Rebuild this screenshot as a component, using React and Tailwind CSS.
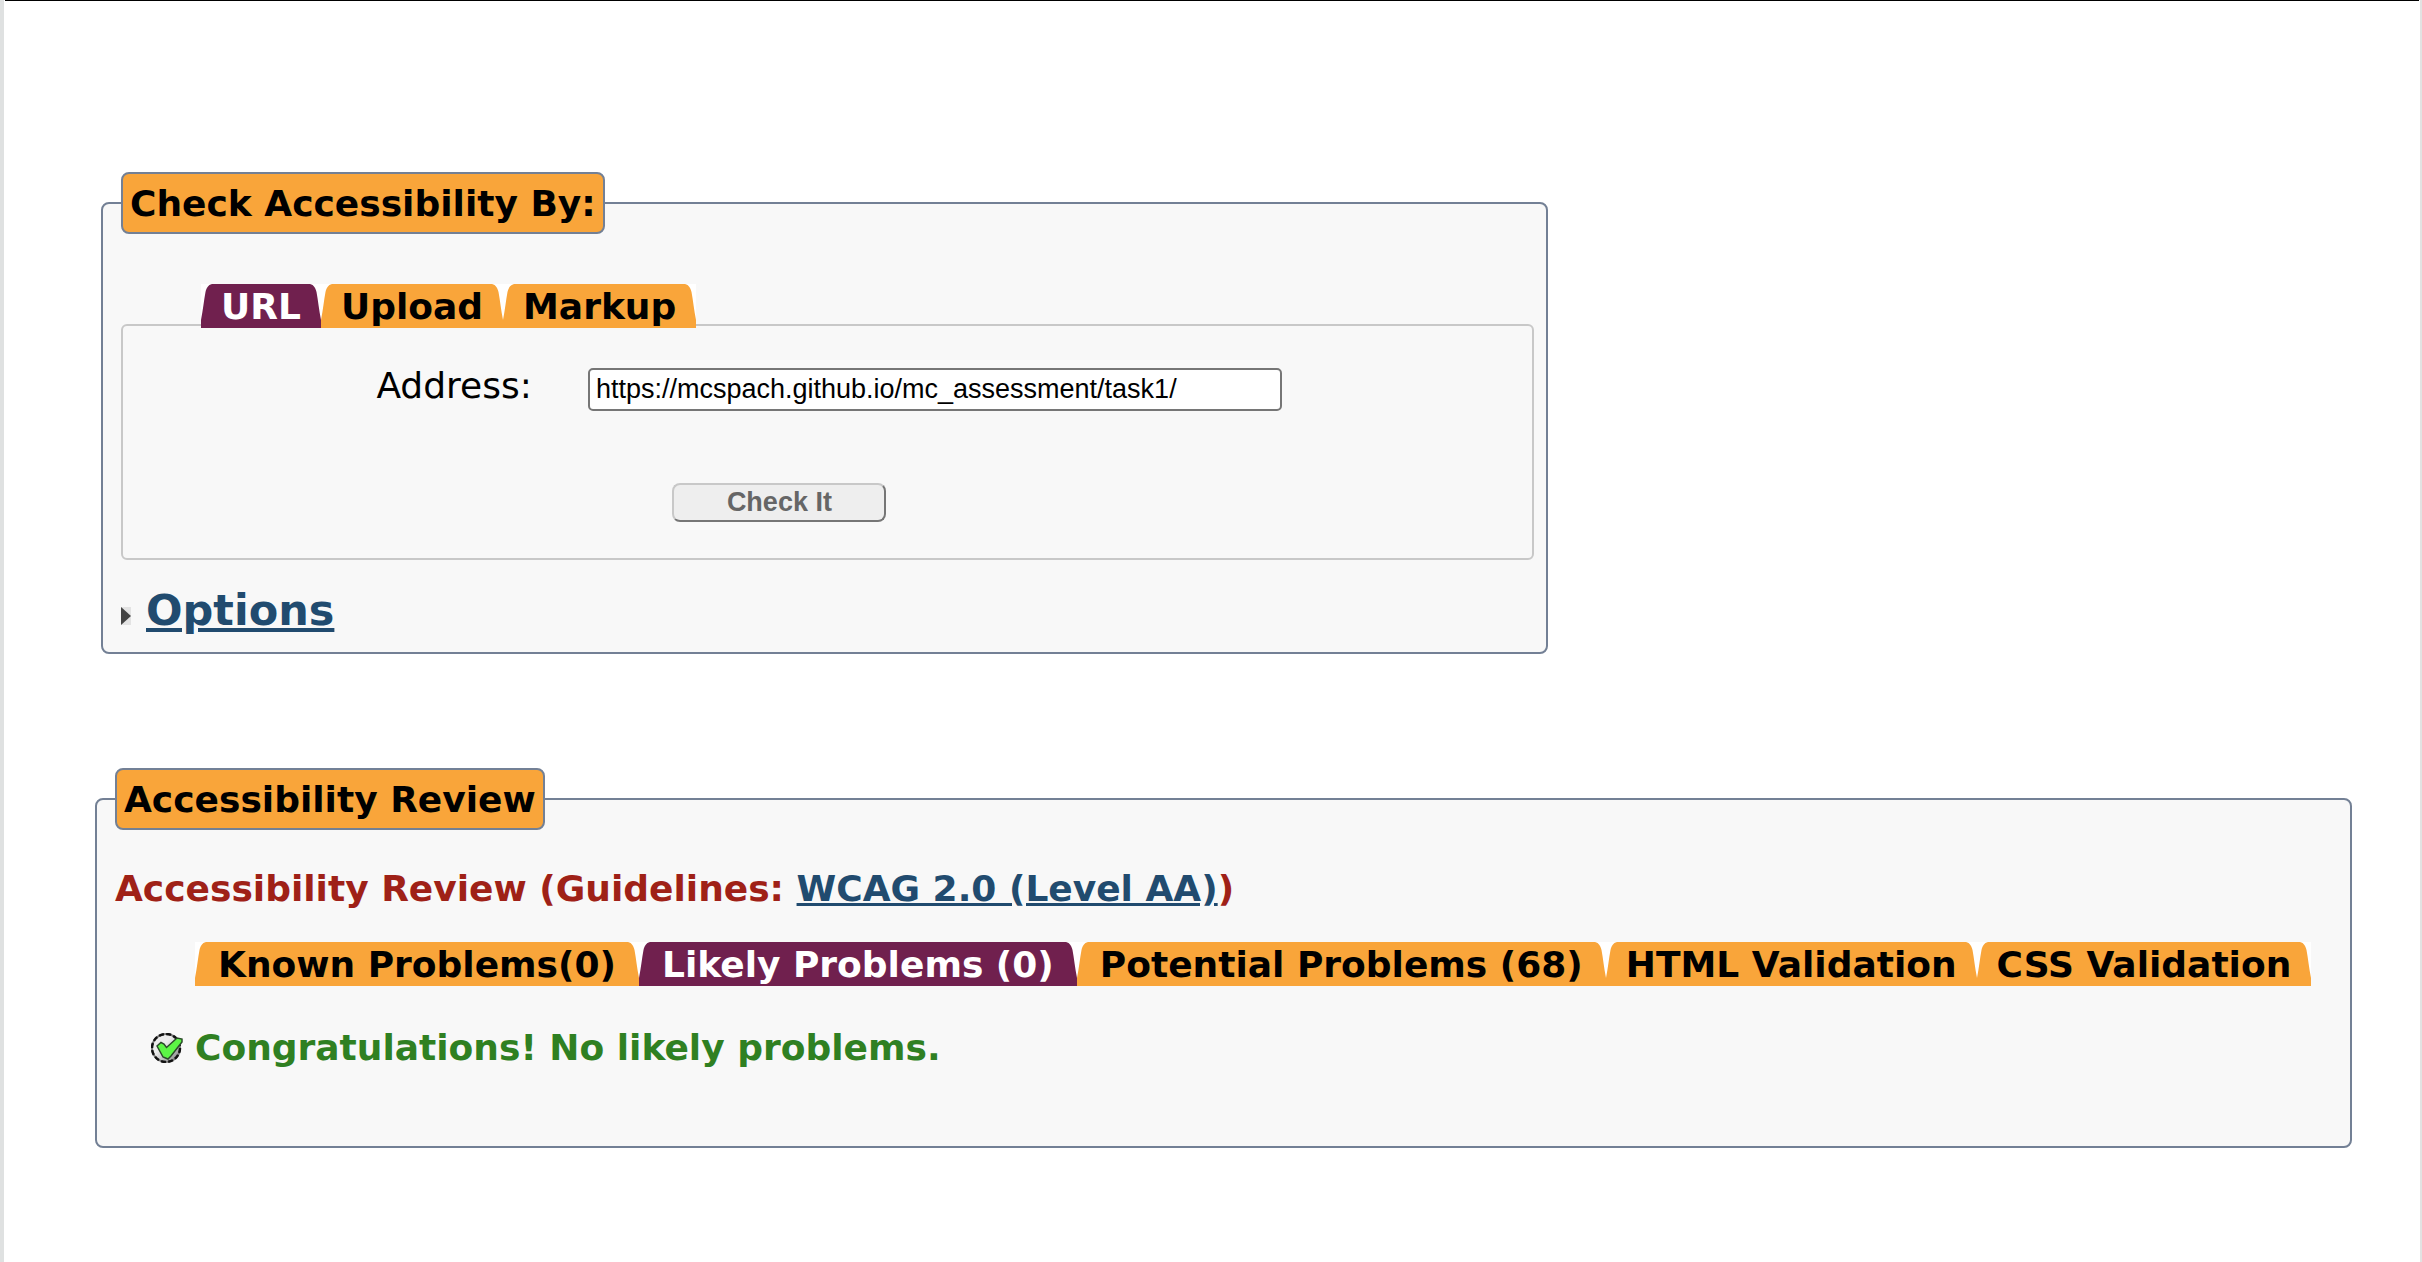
const ORANGE = "#f9a53a";
const PLUM = "#70204e";

function TabCap({ color, flip }) {
  return (
    <svg viewBox="0 0 14 44" aria-hidden="true" className={flip ? "h-11 w-3.5 shrink-0 -scale-x-100" : "h-11 w-3.5 shrink-0"}>
      <path d="M0 44V36C2 26 3 16 4.500 8C5.500 4 7 1 11 0H14V44Z" fill={color} />
    </svg>
  );
}

function Tab({ label, active, wide }) {
  const color = active ? PLUM : ORANGE;
  return (
    <button type="button" role="tab" aria-selected={!!active} className="flex h-11 bg-white">
      <TabCap color={color} />
      <span
        className={
          (active ? "bg-[#70204e] text-white" : "bg-[#f9a53a] text-black") +
          (wide ? " px-[9px]" : " px-1.5") +
          " h-11 text-center leading-[46px] font-bold whitespace-nowrap"
        }
      >
        {label}
      </span>
      <TabCap color={color} flip />
    </button>
  );
}

function Panel({ title, className, children }) {
  return (
    <fieldset className={"min-w-0 rounded-lg border-2 border-[#738095] bg-[#f8f8f8] px-[18px] " + className}>
      <legend className="rounded-lg border-2 border-[#738095] bg-[#f9a53a] px-[7px] text-black">
        <h2 className="pt-0.5 leading-[56px] font-bold">{title}</h2>
      </legend>
      {children}
    </fieldset>
  );
}

function OkIcon() {
  return (
    <svg viewBox="0 0 32 30" aria-hidden="true" className="h-[30px] w-8 shrink-0">
      <defs>
        <linearGradient id="disc" x1="0" y1="0" x2="1" y2="1">
          <stop offset="0.4" stopColor="#ececec" />
          <stop offset="1" stopColor="#7a7a7a" />
        </linearGradient>
      </defs>
      <circle cx="15" cy="15" r="14" fill="url(#disc)" stroke="#777777" strokeWidth="2" />
      <circle cx="15" cy="15" r="14" fill="none" stroke="#111111" strokeWidth="2.500" strokeDasharray="5 2.300" />
      <path d="M6 13L10 9.500L13 11L15.500 14.500L26 5L31 6V9L20 23L17 26L12 24Z" fill="#5cf545" stroke="#2b4a2a" strokeWidth="1.500" />
    </svg>
  );
}

export default function App() {
  return (
    <div className="min-h-screen border-r-2 border-l-4 border-r-[#e2e2e2] border-l-[#dfe1e1] bg-white font-['Verdana','DejaVu_Sans',sans-serif] text-[36px] text-black">
      <main className="mr-px ml-px border-t border-black pt-[171px] pr-[67px] pl-[90px]">
        <Panel title="Check Accessibility By:" className="ml-1.5 w-[64.1%] pb-3">
          <form onSubmit={(e) => e.preventDefault()}>
            <div role="tablist" className="relative mt-[50px] ml-20 flex w-fit">
              <Tab label="URL" active />
              <Tab label="Upload" />
              <Tab label="Markup" />
            </div>
            <div className="-mt-1 -mr-1.5 flex flex-col rounded-md border-2 border-[#c8c8c8] pt-[42px] pb-9">
              <div className="flex items-start">
                <label htmlFor="address" className="w-[33%] shrink-0 pr-14 text-right leading-9 whitespace-nowrap">
                  Address:
                </label>
                <input
                  id="address"
                  type="text"
                  defaultValue="https://mcspach.github.io/mc_assessment/task1/"
                  className="h-[43px] w-[49.3%] rounded-[5px] border-2 border-[#767676] bg-white px-1.5 font-['Liberation_Sans',sans-serif] text-[27px]"
                />
              </div>
              <button
                type="submit"
                className="mt-[72px] ml-[39%] h-[39px] w-[214px] rounded-lg border-2 border-t-[#c8c8c8] border-r-[#767676] border-b-[#767676] border-l-[#c8c8c8] bg-[#eeeeee] font-['Liberation_Sans',sans-serif] text-[27px] leading-[35px] font-bold text-[#666666]"
              >
                Check It
              </button>
            </div>
          </form>
          <h2 className="mt-5 flex items-center text-[43px] leading-[60px] font-bold">
            <svg viewBox="0 0 10 18" aria-hidden="true" className="mt-3 mr-[15px] h-[18px] w-2.5">
              <path d="M0 0H10V18H0Z" fill="#e3e3e3" />
              <path d="M0 0L10 9L0 18Z" fill="#444444" />
            </svg>
            <a href="#options" className="text-[#214b6f] underline">Options</a>
          </h2>
        </Panel>

        <Panel title="Accessibility Review" className="mt-[114px] pb-[76px]">
          <h3 className="mt-[37px] leading-[44px] font-bold text-[#9f2117]">
            Accessibility Review (Guidelines: <a href="#wcag" className="text-[#214b6f] underline">WCAG 2.0 (Level AA)</a>)
          </h3>
          <div role="tablist" className="mt-[31px] ml-20 flex">
            <Tab label="Known Problems(0)" wide />
            <Tab label="Likely Problems (0)" wide active />
            <Tab label="Potential Problems (68)" wide />
            <Tab label="HTML Validation" />
            <Tab label="CSS Validation" />
          </div>
          <p className="mt-10 ml-9 flex items-center gap-3 leading-[44px] font-bold text-[#2f8022]">
            <OkIcon />
            Congratulations! No likely problems.
          </p>
        </Panel>
      </main>
    </div>
  );
}
